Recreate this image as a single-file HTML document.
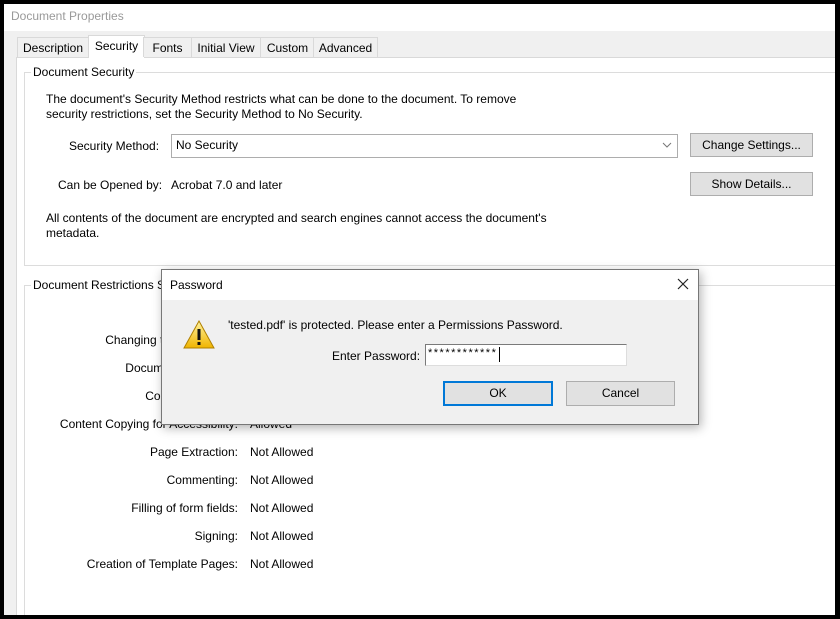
<!DOCTYPE html><html style="overflow:hidden;height:619px"><head><style>
body{margin:0;width:840px;height:619px;background:#000;font-family:"Liberation Sans",sans-serif;font-size:12px;color:#000;position:relative;overflow:hidden}
.a{position:absolute}
.win{left:4px;top:4px;width:831px;height:611px;background:#f0f0f0}
.tb{left:4px;top:4px;width:831px;height:27px;background:#fff}
.tab{top:37px;height:19px;border:1px solid #d9d9d9;border-bottom:none;background:#f0f0f0;line-height:20px;text-align:center}
.panel{left:16px;top:57px;width:819px;height:558px;background:#fff;border-left:1px solid #d9d9d9;border-top:1px solid #d9d9d9}
.grp{border:1px solid #dcdcdc}
.lbl{background:#fff;padding:0 2px}
.btn{background:#e1e1e1;border:1px solid #adadad;text-align:center;line-height:22px;height:22px}
.r{text-align:right;width:200px}
</style></head><body>
<div class="a win"></div>
<div class="a tb"></div>
<div class="a" style="left:11px;top:9px;color:#999">Document Properties</div>
<div class="a panel"></div>
<div class="a tab" style="left:17px;width:70px">Description</div>
<div class="a tab" style="left:88px;top:35px;height:22px;width:55px;background:#fff;line-height:21px">Security</div>
<div class="a tab" style="left:143px;width:47px">Fonts</div>
<div class="a tab" style="left:191px;width:68px">Initial View</div>
<div class="a tab" style="left:260px;width:53px">Custom</div>
<div class="a tab" style="left:313px;width:63px">Advanced</div>
<div class="a grp" style="left:24px;top:72px;width:820px;height:192px"></div>
<div class="a lbl" style="left:31px;top:65px">Document Security</div>
<div class="a" style="left:46px;top:92px;line-height:15px">The document's Security Method restricts what can be done to the document. To remove<br>security restrictions, set the Security Method to No Security.</div>
<div class="a" style="left:69px;top:139px">Security Method:</div>
<div class="a" style="left:171px;top:134px;width:505px;height:22px;border:1px solid #adadad;background:#fff"></div>
<svg class="a" style="left:662px;top:141px" width="10" height="8"><path d="M1 2 L5 6 L9 2" fill="none" stroke="#777" stroke-width="1"/></svg>
<div class="a" style="left:176px;top:138px">No Security</div>
<div class="a btn" style="left:690px;top:133px;width:121px">Change Settings...</div>
<div class="a" style="left:58px;top:178px">Can be Opened by:</div>
<div class="a" style="left:171px;top:178px">Acrobat 7.0 and later</div>
<div class="a btn" style="left:690px;top:172px;width:121px">Show Details...</div>
<div class="a" style="left:46px;top:211px;line-height:15px">All contents of the document are encrypted and search engines cannot access the document's<br>metadata.</div>
<div class="a grp" style="left:24px;top:285px;width:820px;height:340px"></div>
<div class="a lbl" style="left:31px;top:278px">Document Restrictions Summary</div>
<div class="a r" style="left:38px;top:333px">Changing the Document:</div>
<div class="a r" style="left:38px;top:361px">Document Assembly:</div>
<div class="a r" style="left:38px;top:389px">Content Copying:</div>
<div class="a r" style="left:38px;top:417px">Content Copying for Accessibility:</div>
<div class="a" style="left:250px;top:417px">Allowed</div>
<div class="a r" style="left:38px;top:445px">Page Extraction:</div><div class="a" style="left:250px;top:445px">Not Allowed</div>
<div class="a r" style="left:38px;top:473px">Commenting:</div><div class="a" style="left:250px;top:473px">Not Allowed</div>
<div class="a r" style="left:38px;top:501px">Filling of form fields:</div><div class="a" style="left:250px;top:501px">Not Allowed</div>
<div class="a r" style="left:38px;top:529px">Signing:</div><div class="a" style="left:250px;top:529px">Not Allowed</div>
<div class="a r" style="left:38px;top:557px">Creation of Template Pages:</div><div class="a" style="left:250px;top:557px">Not Allowed</div>
<div class="a" style="left:0;top:615px;width:840px;height:4px;background:#000"></div>
<div class="a" style="left:835px;top:0;width:5px;height:619px;background:#000"></div>
<!-- dialog -->
<div class="a" style="left:161px;top:269px;width:536px;height:154px;background:#f0f0f0;border:1px solid #777;box-shadow:2px 3px 10px rgba(0,0,0,.3)"></div>
<div class="a" style="left:162px;top:270px;width:536px;height:30px;background:#fff"></div>
<div class="a" style="left:170px;top:278px">Password</div>
<svg class="a" style="left:677px;top:278px" width="12" height="12"><path d="M1 1 L11 11 M11 1 L1 11" stroke="#222" stroke-width="1.2"/></svg>
<svg class="a" style="left:183px;top:320px" width="32" height="30" viewBox="0 0 32 30"><defs><linearGradient id="g" x1="0" y1="0" x2="0" y2="1"><stop offset="0" stop-color="#fff3a0"/><stop offset="1" stop-color="#f0b400"/></linearGradient></defs><path d="M16 1 L31 28 L1 28 Z" fill="url(#g)" stroke="#b08000" stroke-width="1"/><rect x="14.5" y="9" width="3" height="11" fill="#111"/><rect x="14.5" y="22" width="3" height="3" fill="#111"/></svg>
<div class="a" style="left:228px;top:318px">'tested.pdf' is protected. Please enter a Permissions Password.</div>
<div class="a" style="left:332px;top:349px">Enter Password:</div>
<div class="a" style="left:425px;top:344px;width:200px;height:20px;background:#fff;border:1px solid #7a7a7a;border-right-color:#ddd;border-bottom-color:#ddd"></div>
<div class="a" style="left:428px;top:347px;font-size:11px;letter-spacing:1.5px">************</div>
<div class="a" style="left:499px;top:347px;width:1px;height:15px;background:#000"></div>
<div class="a btn" style="left:443px;top:381px;width:106px;height:21px;border:2px solid #0078d7;line-height:21px">OK</div>
<div class="a btn" style="left:566px;top:381px;width:107px;height:23px">Cancel</div>
</body></html>
